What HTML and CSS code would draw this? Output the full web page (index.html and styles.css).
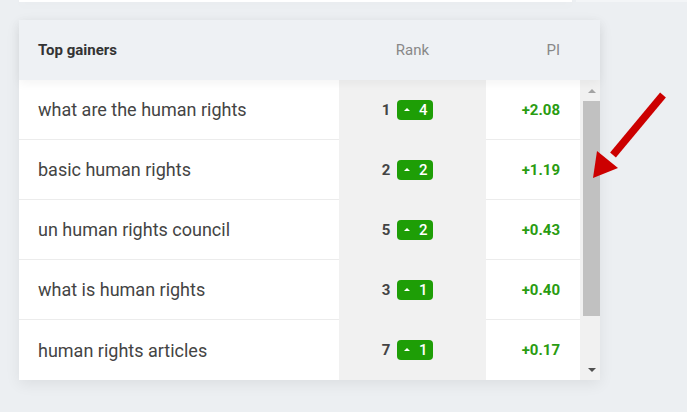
FILE: index.html
```html
<!DOCTYPE html>
<html>
<head>
<meta charset="utf-8">
<link rel="stylesheet" href="styles.css">
</head>
<body>
<div class="topstrip"><div class="prev"></div><div class="prev-right"></div></div>
<div class="card">
  <div class="head">
    <div class="h-name">Top gainers</div>
    <div class="h-rank">Rank</div>
    <div class="h-pi">PI</div>
    <div class="h-sb"></div>
  </div>
  <div class="body">
    <div class="rows">
      <div class="row"><div class="c-name">what are the human rights</div><div class="c-rank"><span class="num">1</span><span class="badge"><span class="caret"></span>4</span></div><div class="c-pi">+2.08</div></div>
      <div class="row"><div class="c-name">basic human rights</div><div class="c-rank"><span class="num">2</span><span class="badge"><span class="caret"></span>2</span></div><div class="c-pi">+1.19</div></div>
      <div class="row"><div class="c-name">un human rights council</div><div class="c-rank"><span class="num">5</span><span class="badge"><span class="caret"></span>2</span></div><div class="c-pi">+0.43</div></div>
      <div class="row"><div class="c-name">what is human rights</div><div class="c-rank"><span class="num">3</span><span class="badge"><span class="caret"></span>1</span></div><div class="c-pi">+0.40</div></div>
      <div class="row"><div class="c-name">human rights articles</div><div class="c-rank"><span class="num">7</span><span class="badge"><span class="caret"></span>1</span></div><div class="c-pi">+0.17</div></div>
    </div>
    <div class="sb">
      <div class="sb-up"></div>
      <div class="sb-thumb"></div>
      <div class="sb-down"></div>
    </div>
  </div>
</div>
<svg class="arrow" width="100" height="110" viewBox="0 0 100 110">
  <line x1="85" y1="15" x2="35" y2="75" stroke="#cc0000" stroke-width="7.5"/>
  <polygon points="15,98 19,71 40,88" fill="#cc0000"/>
</svg>
</body>
</html>
```

FILE: styles.css
```css
html, body {
  margin: 0;
  padding: 0;
}
body {
  background: #eceff2;
  font-family: Roboto, "Liberation Sans", sans-serif;
  width: 687px;
  height: 412px;
  overflow: hidden;
  position: relative;
}
.topstrip {
  display: flex;
  height: 2px;
  margin-left: 19px;
}
.prev {
  width: 553px;
  height: 2px;
  background: #fff;
  box-shadow: 0 2px 10px rgba(0,0,0,0.05);
}
.prev-right {
  margin-left: 4px;
  width: 111px;
  height: 2px;
  background: #f3f5f7;
}
.card {
  margin: 18px 0 0 19px;
  width: 581px;
  background: #fff;
  box-shadow: 0 4px 14px rgba(0,0,0,0.07);
}
.head {
  display: grid;
  grid-template-columns: 320px 147px 94px 20px;
  height: 60px;
  align-items: center;
  background: #eef1f4;
  position: relative;
  z-index: 1;
  box-shadow: 0 3px 10px rgba(0,0,0,0.05);
  font-size: 15px;
}
.h-name {
  padding-left: 19px;
  font-weight: 700;
  color: #333;
}
.h-rank {
  text-align: center;
  color: #888;
}
.h-pi {
  text-align: right;
  padding-right: 20px;
  color: #888;
}
.body {
  display: flex;
  height: 300px;
}
.rows {
  width: 561px;
}
.row {
  display: grid;
  grid-template-columns: 320px 147px 94px;
  height: 60px;
}
.c-name {
  display: flex;
  align-items: center;
  padding-left: 19px;
  font-size: 18px;
  color: #444;
  border-bottom: 1px solid #ececec;
}
.c-rank {
  display: flex;
  align-items: center;
  justify-content: center;
  background: #f1f1f1;
  padding-right: 10px;
  gap: 7px;
}
.num {
  font-size: 15px;
  font-weight: 700;
  color: #444;
}
.badge {
  display: inline-flex;
  align-items: center;
  justify-content: center;
  gap: 9px;
  width: 36px;
  height: 20px;
  border-radius: 4px;
  background: #1e9e06;
  color: #fff;
  font-size: 15px;
  font-weight: 500;
  box-sizing: border-box;
  padding-left: 1px;
}
.caret {
  width: 0;
  height: 0;
  border-left: 3px solid transparent;
  border-right: 3px solid transparent;
  border-bottom: 3px solid #fff;
  margin-top: -2px;
}
.c-pi {
  display: flex;
  align-items: center;
  justify-content: flex-end;
  padding-right: 20px;
  font-size: 15px;
  font-weight: 700;
  color: #2a9c12;
  border-bottom: 1px solid #ececec;
}
.row:last-child .c-name,
.row:last-child .c-pi {
  border-bottom: none;
}
.sb {
  width: 20px;
  background: #f1f1f1;
  display: flex;
  flex-direction: column;
  align-items: flex-end;
}
.sb-up, .sb-down {
  width: 17px;
  height: 21px;
  display: flex;
  justify-content: center;
  align-items: center;
}
.sb-up::before {
  content: "";
  border-left: 4px solid transparent;
  border-right: 4px solid transparent;
  border-bottom: 4px solid #a3a3a3;
}
.sb-down::before {
  content: "";
  border-left: 4px solid transparent;
  border-right: 4px solid transparent;
  border-top: 4px solid #505050;
}
.sb-thumb {
  width: 17px;
  height: 215px;
  background: #c1c1c1;
}
.sb-down {
  margin-top: auto;
}
.arrow {
  position: absolute;
  left: 578px;
  top: 80px;
}
```
